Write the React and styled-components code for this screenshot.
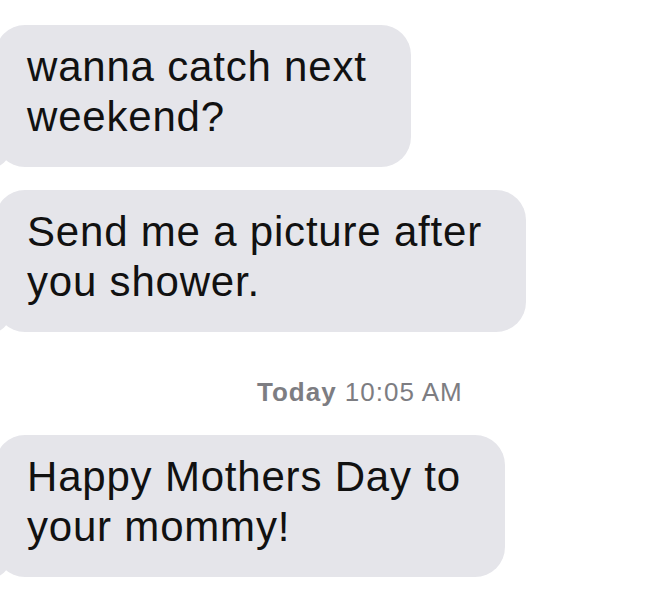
import React from "react";
import styled, { createGlobalStyle } from "styled-components";

const GlobalStyle = createGlobalStyle`
  html, body {
    margin: 0;
    padding: 0;
    background: #ffffff;
  }
  body {
    font-family: "Liberation Sans", Arial, Helvetica, sans-serif;
    -webkit-font-smoothing: antialiased;
  }
`;

const Thread = styled.div`
  width: 650px;
  height: 595px;
  overflow: hidden;
  display: flex;
  flex-direction: column;
  align-items: flex-start;
  padding-top: 25px;
  box-sizing: border-box;
`;

const Bubble = styled.div`
  position: relative;
  margin-left: -5px;
  margin-top: ${(p) => p.gap || 0}px;
  padding: 17px 44px 25px 32px;
  background: #e5e5ea;
  border-radius: 30px;
  color: #111;
  font-size: 42px;
  line-height: 50px;
  letter-spacing: 0.8px;
  white-space: nowrap;

  &::before {
    content: "";
    position: absolute;
    bottom: 0;
    left: -8px;
    width: 22px;
    height: 22px;
    background: #e5e5ea;
    border-bottom-right-radius: 16px;
  }
  &::after {
    content: "";
    position: absolute;
    bottom: 0;
    left: -12px;
    width: 12px;
    height: 22px;
    background: #ffffff;
    border-bottom-right-radius: 10px;
  }
`;

const Line = styled.span`
  display: block;
  position: relative;
  z-index: 1;
`;

const Stamp = styled.div`
  align-self: stretch;
  margin-top: 45px;
  padding-left: 257px;
  font-size: 26px;
  line-height: 30px;
  letter-spacing: 1px;
  color: #7d7d82;
`;

const StampDay = styled.b`
  font-weight: 700;
`;

const messages = [
  ["wanna catch next", "weekend?"],
  ["Send me a picture after", "you shower."],
];

export default function App() {
  return (
    <>
      <GlobalStyle />
      <Thread>
        {messages.map((lines, i) => (
          <Bubble key={i} gap={i === 0 ? 0 : 23}>
            {lines.map((l) => (
              <Line key={l}>{l}</Line>
            ))}
          </Bubble>
        ))}
        <Stamp>
          <StampDay>Today</StampDay> 10:05 AM
        </Stamp>
        <Bubble gap={28}>
          <Line>Happy Mothers Day to</Line>
          <Line>your mommy!</Line>
        </Bubble>
      </Thread>
    </>
  );
}
